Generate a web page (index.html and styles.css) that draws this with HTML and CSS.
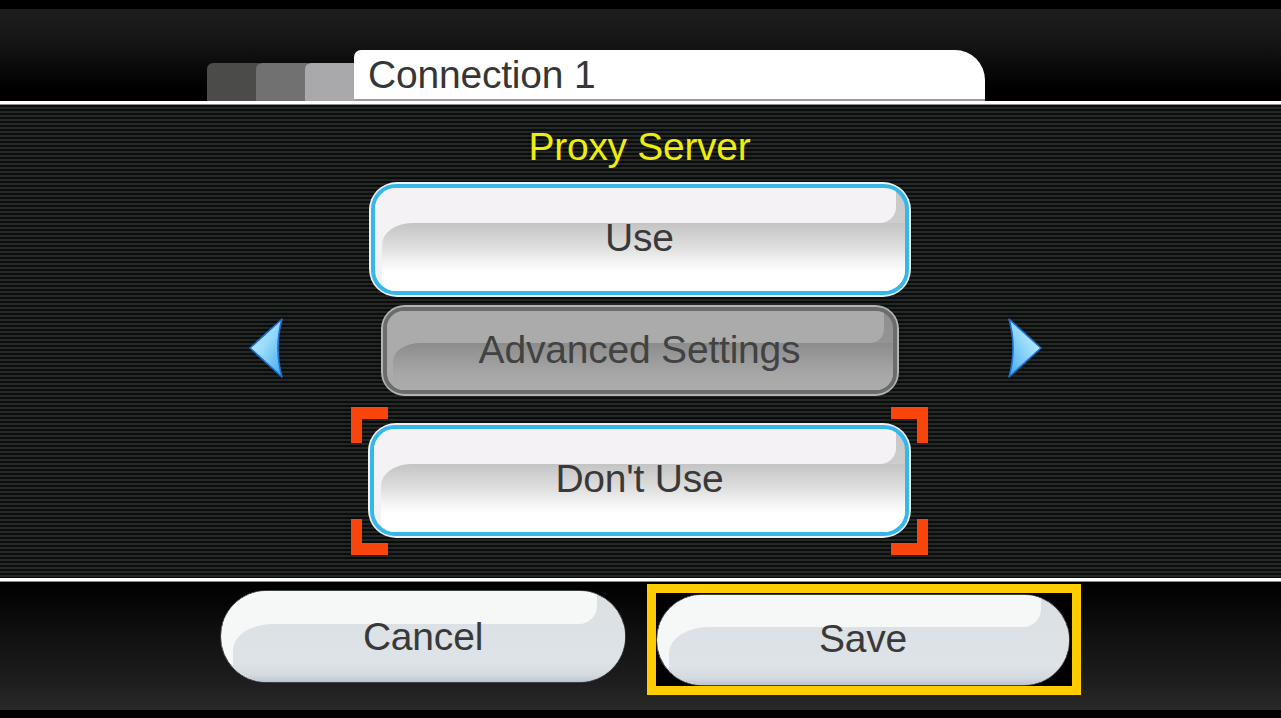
FILE: index.html
```html
<!DOCTYPE html>
<html lang="en">
<head>
<meta charset="utf-8">
<title>Connection 1 - Proxy Server</title>
<link rel="stylesheet" href="styles.css">
</head>
<body>
<div class="screen">
  <header class="topbar">
    <div class="tabs">
      <span class="tab-small t1"></span>
      <span class="tab-small t2"></span>
      <span class="tab-small t3"></span>
      <div class="tab-main">Connection 1</div>
    </div>
  </header>
  <div class="rule"></div>
  <main class="main">
    <svg class="arrow arrow-left" width="36" height="62" viewBox="0 0 36 62">
      <defs>
        <linearGradient id="ag1" x1="0" y1="0" x2="1" y2="1">
          <stop offset="0" stop-color="#d2f2ff"/>
          <stop offset="0.45" stop-color="#9adcfc"/>
          <stop offset="1" stop-color="#3fa9ec"/>
        </linearGradient>
      </defs>
      <path d="M2 31 L34 2 Q26 31 34 60 Z" fill="url(#ag1)" stroke="#1b6fd0" stroke-width="1.6" stroke-linejoin="round"/>
    </svg>
    <div class="column">
      <h1 class="title">Proxy Server</h1>
      <div class="opt"><div class="face"><span class="label">Use</span></div></div>
      <div class="opt opt-dim"><div class="face"><span class="label">Advanced Settings</span></div></div>
      <div class="focus">
        <div class="opt"><div class="face"><span class="label">Don't Use</span></div></div>
      </div>
    </div>
    <svg class="arrow arrow-right" width="36" height="62" viewBox="0 0 36 62">
      <defs>
        <linearGradient id="ag2" x1="1" y1="0" x2="0" y2="1">
          <stop offset="0" stop-color="#d2f2ff"/>
          <stop offset="0.45" stop-color="#9adcfc"/>
          <stop offset="1" stop-color="#3fa9ec"/>
        </linearGradient>
      </defs>
      <path d="M34 31 L2 2 Q10 31 2 60 Z" fill="url(#ag2)" stroke="#1b6fd0" stroke-width="1.6" stroke-linejoin="round"/>
    </svg>
  </main>
  <div class="rule"></div>
  <footer class="bottom">
    <div class="pill cancel"><span class="label">Cancel</span></div>
    <div class="save-frame">
      <div class="pill save"><span class="label">Save</span></div>
    </div>
  </footer>
  <div class="edge"></div>
</div>
</body>
</html>
```
FILE: styles.css
```css
* { box-sizing: border-box; }
html, body { margin: 0; padding: 0; background: #000; }
body {
  width: 1281px;
  height: 718px;
  overflow: hidden;
  font-family: "Liberation Sans", Arial, sans-serif;
}
.screen {
  display: flex;
  flex-direction: column;
  width: 1281px;
  height: 718px;
}

/* ---------- top bar ---------- */
.topbar {
  height: 101px;
  display: flex;
  align-items: flex-end;
  padding-left: 207px;
  background: linear-gradient(#000 0, #000 9px, #1d1d1d 9px, #161616 40px, #080808 70px, #000 90px, #000 100%);
}
.tabs {
  display: flex;
  align-items: flex-end;
}
.tab-small {
  width: 57px;
  height: 38px;
  margin-right: -8px;
  border-radius: 6px 6px 0 0;
}
.t1 { background: #4b4b4a; }
.t2 { background: #727172; }
.t3 { background: #a9a8aa; }
.tab-main {
  width: 631px;
  height: 51px;
  background: #fff;
  border-bottom: 2px solid #9c9c9c;
  border-radius: 7px 30px 0 0;
  padding-left: 14px;
  padding-top: 2px;
  font-size: 39px;
  line-height: 46px;
  color: #363636;
  letter-spacing: -0.2px;
}

.rule {
  height: 4px;
  background: linear-gradient(#fff 0, #fff 3px, #8c8c8c 3px);
}

/* ---------- main ---------- */
.main {
  height: 473px;
  display: flex;
  align-items: flex-start;
  padding-left: 248px;
  background: repeating-linear-gradient(#0b0d0c 0, #0b0d0c 2px, #232826 2px, #232826 4px);
}
.arrow {
  display: block;
  margin-top: 212px;
  flex: none;
}
.arrow-left { margin-right: 67px; }
.arrow-right { margin-left: 79px; }

.column {
  width: 577px;
  display: flex;
  flex-direction: column;
  align-items: center;
}
.title {
  margin: 20px 0 0;
  font-weight: normal;
  font-size: 39px;
  line-height: 44px;
  color: #eeee0a;
  letter-spacing: -0.3px;
}

/* option buttons */
.opt {
  width: 542px;
  height: 115px;
  margin-top: 13px;
  padding: 2px;
  border-radius: 28px;
  background: #f2f2f2;
}
.face {
  position: relative;
  height: 100%;
  overflow: hidden;
  border: 4px solid #37b6ea;
  border-radius: 25px;
  display: flex;
  align-items: center;
  justify-content: center;
  padding-bottom: 4px;
  background:
    linear-gradient(#f4f2f5, #f4f2f5) left top / 50% 100% no-repeat,
    linear-gradient(#c7c7c7 0, #cdcdcd 34%, #e8e8e8 55%, #fff 75%, #fff 100%);
}
.face::before {
  content: "";
  position: absolute;
  left: 7px;
  right: 0;
  top: 34%;
  bottom: 0;
  border-top-left-radius: 30px 22px;
  background: linear-gradient(#c4c4c4 0, #dedede 35%, #f4f4f4 58%, #fff 72%, #fff 100%);
}
.face::after {
  content: "";
  position: absolute;
  left: 0;
  right: 9px;
  top: 0;
  height: 34%;
  border-bottom-right-radius: 16px;
  background: #f4f2f5;
}
.label {
  position: relative;
  z-index: 1;
  font-size: 39px;
  line-height: 44px;
  color: #393939;
  letter-spacing: -0.2px;
}

.opt-dim {
  width: 518px;
  height: 91px;
  margin-top: 8px;
  border-radius: 24px;
  background: #b4b4b4;
}
.opt-dim .face {
  border: 4px solid #6c6c6c;
  border-radius: 21px;
  padding-bottom: 2px;
  background:
    linear-gradient(#ababab, #ababab) left top / 50% 100% no-repeat,
    linear-gradient(#8e8e8e 0, #949494 40%, #a5a5a5 70%, #acacac 100%);
}
.opt-dim .face::before {
  top: 40%;
  left: 6px;
  border-top-left-radius: 28px 18px;
  background: linear-gradient(#8c8c8c 0, #9b9b9b 35%, #a8a8a8 70%, #acacac 100%);
}
.opt-dim .face::after {
  height: 40%;
  right: 9px;
  border-bottom-right-radius: 14px;
  background: #ababab;
}
.opt-dim .label { color: #424242; }

/* focus brackets */
.focus {
  --c: #f9440b;
  width: 577px;
  margin-top: 11px;
  padding: 16px 17px 17px 17px;
  background:
    linear-gradient(var(--c), var(--c)) left top / 37px 12px no-repeat,
    linear-gradient(var(--c), var(--c)) left top / 11px 36px no-repeat,
    linear-gradient(var(--c), var(--c)) right top / 37px 12px no-repeat,
    linear-gradient(var(--c), var(--c)) right top / 11px 36px no-repeat,
    linear-gradient(var(--c), var(--c)) left bottom / 37px 12px no-repeat,
    linear-gradient(var(--c), var(--c)) left bottom / 11px 36px no-repeat,
    linear-gradient(var(--c), var(--c)) right bottom / 37px 12px no-repeat,
    linear-gradient(var(--c), var(--c)) right bottom / 11px 36px no-repeat;
}
.focus .opt { margin-top: 0; width: 543px; }

/* ---------- bottom ---------- */
.bottom {
  height: 128px;
  display: flex;
  align-items: flex-start;
  padding-left: 220px;
  background: linear-gradient(#000 0, #050505 15%, #121212 45%, #1c1c1c 75%, #292929 100%);
}
.edge {
  height: 8px;
  background: #000;
}
.pill {
  position: relative;
  overflow: hidden;
  display: flex;
  align-items: center;
  justify-content: center;
  border: 1px solid #3c4146;
  border-radius: 47px;
  background:
    linear-gradient(#f5f8f7, #f5f8f7) left top / 50% 100% no-repeat,
    linear-gradient(#dbe0e4 0, #dde2e6 70%, #c9d0d7 100%);
}
.pill::before {
  content: "";
  position: absolute;
  left: 12px;
  right: 0;
  top: 36%;
  bottom: 0;
  border-top-left-radius: 40px 26px;
  background: linear-gradient(#dce1e5 0, #dee3e7 65%, #d4dae0 88%, #bcc5ce 100%);
}
.pill::after {
  content: "";
  position: absolute;
  left: 0;
  right: 28px;
  top: 0;
  height: 36%;
  border-bottom-right-radius: 18px;
  background: #f5f8f7;
}
.pill .label { color: #393939; }
.cancel {
  width: 406px;
  height: 93px;
  margin-top: 8px;
}
.save-frame {
  margin-left: 21px;
  margin-top: 2px;
  border: 9px solid #ffcc00;
  background: #000;
  padding: 1px 2px 0 0;
}
.save {
  width: 414px;
  height: 92px;
  padding-bottom: 3px;
}
```
